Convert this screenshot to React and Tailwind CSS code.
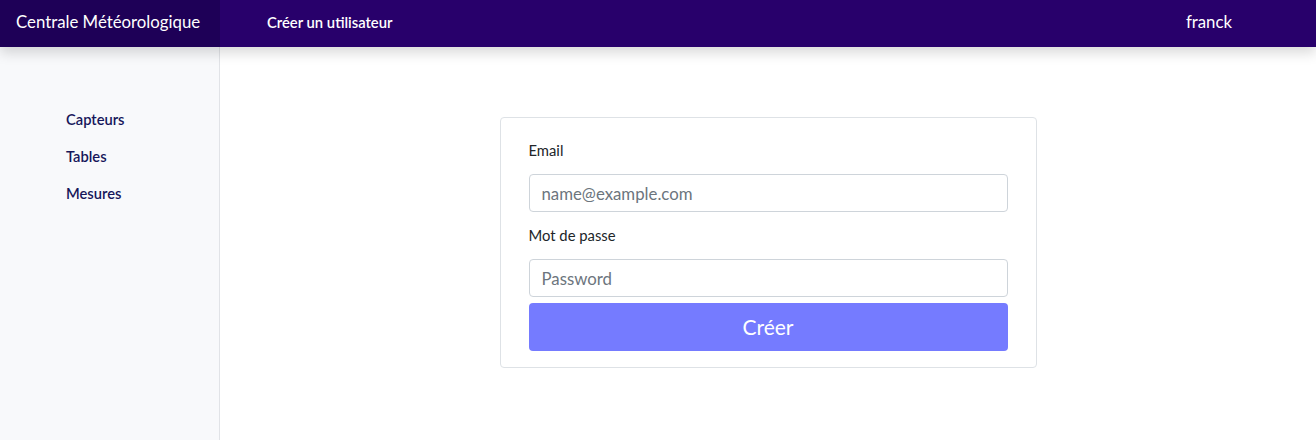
export default function App() {
  return (
    <div
      className="min-h-[440px] bg-white"
      style={{ fontFamily: "Lato, 'Open Sans', sans-serif" }}
    >
      {/* Navbar */}
      <nav className="relative z-10 flex h-[47px] items-center bg-[#28006b] pb-[3px] text-white shadow-[0_6px_12px_rgba(0,0,0,0.15)]">
        <div className="-mb-[3px] flex h-[47px] w-[220px] items-center bg-[#1e0057] pb-[3px] pl-4 text-[16.8px]">
          Centrale Météorologique
        </div>
        <div className="ml-[47px] text-[14.8px] font-semibold">
          Créer un utilisateur
        </div>
        <div className="ml-auto mr-[84px] text-[16.8px]">franck</div>
      </nav>

      <div className="flex">
        {/* Sidebar */}
        <aside className="min-h-[393px] w-[220px] border-r border-[#e1e3e7] bg-[#f8f9fb] pl-[66px] pt-[61px]">
          <ul className="space-y-[15px] text-[14.7px] font-semibold text-[#16165a]">
            <li className="leading-[22px]">Capteurs</li>
            <li className="leading-[22px]">Tables</li>
            <li className="leading-[22px]">Mesures</li>
          </ul>
        </aside>

        {/* Main */}
        <main className="flex flex-1 justify-center pt-[70px]">
          <div className="h-[251px] w-[537px] rounded border border-[#dee2e6] px-[28px] pt-[22px]">
            <label className="block text-[14.8px] leading-[20px] text-[#212529]">
              Email
            </label>
            <input
              type="email"
              placeholder="name@example.com"
              className="mt-[14px] h-[38px] w-[479px] rounded border border-[#ced4da] px-3 text-[16.8px] text-[#212529] placeholder:text-[#6c757d] outline-none"
            />
            <label className="mt-[13px] block text-[14.8px] leading-[20px] text-[#212529]">
              Mot de passe
            </label>
            <input
              type="password"
              placeholder="Password"
              className="mt-[14px] h-[38px] w-[479px] rounded border border-[#ced4da] px-3 text-[16.8px] text-[#212529] placeholder:text-[#6c757d] outline-none"
            />
            <button className="mt-[6px] h-[48px] w-[479px] rounded bg-[#757bff] text-[21px] text-white">
              Créer
            </button>
          </div>
        </main>
      </div>
    </div>
  );
}
